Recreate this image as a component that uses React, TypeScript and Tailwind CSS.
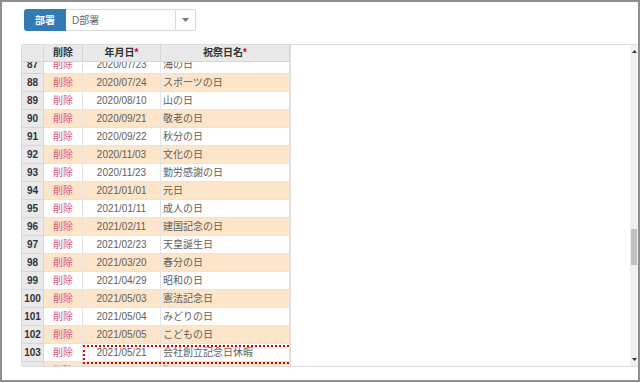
import { Fragment } from 'react'

type Row = { no: number; date: string; name: string }

const rows: Row[] = [
  { no: 87, date: '2020/07/23', name: '海の日' },
  { no: 88, date: '2020/07/24', name: 'スポーツの日' },
  { no: 89, date: '2020/08/10', name: '山の日' },
  { no: 90, date: '2020/09/21', name: '敬老の日' },
  { no: 91, date: '2020/09/22', name: '秋分の日' },
  { no: 92, date: '2020/11/03', name: '文化の日' },
  { no: 93, date: '2020/11/23', name: '勤労感謝の日' },
  { no: 94, date: '2021/01/01', name: '元日' },
  { no: 95, date: '2021/01/11', name: '成人の日' },
  { no: 96, date: '2021/02/11', name: '建国記念の日' },
  { no: 97, date: '2021/02/23', name: '天皇誕生日' },
  { no: 98, date: '2021/03/20', name: '春分の日' },
  { no: 99, date: '2021/04/29', name: '昭和の日' },
  { no: 100, date: '2021/05/03', name: '憲法記念日' },
  { no: 101, date: '2021/05/04', name: 'みどりの日' },
  { no: 102, date: '2021/05/05', name: 'こどもの日' },
  { no: 103, date: '2021/05/21', name: '会社創立記念日休暇' },
  { no: 104, date: '2021/07/22', name: '海の日' },
]

const font = { fontFamily: '"Liberation Sans", "Noto Sans CJK JP", sans-serif' }

function GridRow({ row }: { row: Row }) {
  const peach = row.no % 2 === 0
  const bg = peach ? 'bg-[#fde5c9]' : 'bg-white'
  return (
    <div className="relative grid h-[18px] grid-cols-[22px_39px_78px_129px] text-[10px] leading-[17px]">
      <div className="border-b border-r border-[#d6d6d6] bg-[#e9e9e9] text-center font-bold text-[#333]">{row.no}</div>
      <div className={`border-b border-r border-[#e4e4e4] text-center text-[#d4587a] ${bg}`}>削除</div>
      <div className={`border-b border-r border-[#e4e4e4] text-center text-[#5f5f5f] ${bg}`}>{row.date}</div>
      <div className={`border-b border-r border-[#e4e4e4] pl-[2px] text-[#5f5f5f] ${bg}`}>{row.name}</div>
      {row.no === 103 && (
        <div className="pointer-events-none absolute left-[61px] top-[1px] z-10 h-[19px] w-[210px] border-2 border-dotted border-[#e00000]" />
      )}
    </div>
  )
}

export default function App() {
  return (
    <div className="h-[382px] w-[640px] border-2 border-[#8e8e8e] bg-white pl-[19px] pt-[7px]" style={font}>
      <div className="ml-[3px] flex h-[22px] items-stretch">
        <div className="flex w-[42px] items-center justify-center rounded-l-[3px] bg-[#337ab7] text-[10px] font-bold text-white">部署</div>
        <div className="flex w-[130px] rounded-r-[3px] border border-l-0 border-[#d9d9d9]">
          <div className="flex flex-1 items-center pl-[6px] text-[10px] text-[#666]">D部署</div>
          <div className="flex w-[20px] items-center justify-center border-l border-[#d9d9d9]">
            <svg width="7" height="4" viewBox="0 0 7 4"><path d="M0 0h7L3.5 4z" fill="#777" /></svg>
          </div>
        </div>
      </div>

      <div className="mt-[13px] flex h-[323px] rounded-l-[3px] border-y border-l border-[#dcdcdc]">
        <div className="flex w-[268px] flex-col overflow-hidden">
          <div className="grid h-[17px] shrink-0 grid-cols-[22px_39px_78px_129px] bg-[#e9e9e9] text-[10px] font-bold leading-[16px] text-[#333]">
            {['', '削除', '年月日', '祝祭日名'].map((h, i) => (
              <div key={i} className="border-b border-r border-[#d6d6d6] text-center">
                {h}
                {i > 1 && <span className="text-[10px] text-[#e00000]">*</span>}
              </div>
            ))}
          </div>
          <div className="flex-1 overflow-hidden">
            <div className="-mt-[6px]">
              {rows.map(r => (
                <Fragment key={r.no}>
                  <GridRow row={r} />
                </Fragment>
              ))}
            </div>
          </div>
        </div>
        <div className="flex-1 border-l border-[#dcdcdc] bg-white" />
        <div className="flex w-[8px] flex-col items-center justify-between bg-[#f0f0f0] py-[5px]">
          <svg width="5" height="3" viewBox="0 0 5 3"><path d="M0 3h5L2.5 0z" fill="#333" /></svg>
          <div className="mb-[88px] mt-[170px] h-[36px] w-[6px] bg-[#c1c1c1]" />
          <svg width="5" height="3" viewBox="0 0 5 3"><path d="M0 0h5L2.5 3z" fill="#333" /></svg>
        </div>
      </div>
    </div>
  )
}
